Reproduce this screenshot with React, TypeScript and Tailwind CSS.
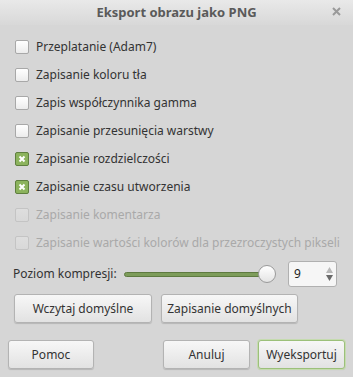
import React from "react";

const options = [
  { label: "Przeplatanie (Adam7)", checked: false, disabled: false },
  { label: "Zapisanie koloru tła", checked: false, disabled: false },
  { label: "Zapis współczynnika gamma", checked: false, disabled: false },
  { label: "Zapisanie przesunięcia warstwy", checked: false, disabled: false },
  { label: "Zapisanie rozdzielczości", checked: true, disabled: false },
  { label: "Zapisanie czasu utworzenia", checked: true, disabled: false },
  { label: "Zapisanie komentarza", checked: false, disabled: true },
  { label: "Zapisanie wartości kolorów dla przezroczystych pikseli", checked: false, disabled: true },
];

function Check({ checked, disabled }: { checked: boolean; disabled: boolean }) {
  if (checked) {
    return (
      <div className="w-[14px] h-[14px] shrink-0 rounded-[2px] border border-[#5f7f3f] bg-[#8cb35d] flex items-center justify-center">
        <svg width="8" height="8" viewBox="0 0 8 8">
          <path d="M1.5 1.5 L6.5 6.5 M6.5 1.5 L1.5 6.5" stroke="#fff" strokeWidth="2" />
        </svg>
      </div>
    );
  }
  return (
    <div
      className={
        "w-[14px] h-[14px] shrink-0 rounded-[2px] border bg-gradient-to-b " +
        (disabled
          ? "border-[#c4c4c4] from-[#dedede] to-[#d8d8d8]"
          : "border-[#a8a8a8] from-[#ffffff] to-[#ececec]")
      }
    />
  );
}

function Btn({ children, className = "" }: { children: React.ReactNode; className?: string }) {
  return (
    <div
      className={
        "h-[29px] shrink-0 rounded-[3px] border bg-gradient-to-b from-[#f7f7f7] to-[#e2e2e2] flex items-center justify-center text-[12px] whitespace-nowrap text-[#333] shadow-[0_1px_1px_rgba(0,0,0,0.15)] " +
        className
      }
    >
      {children}
    </div>
  );
}

export default function App() {
  return (
    <div
      className="w-[353px] h-[377px] bg-[#d6d6d6] flex flex-col overflow-hidden"
      style={{ fontFamily: '"Noto Sans", sans-serif' }}
    >
      <div className="h-[25px] relative flex items-center justify-center bg-gradient-to-b from-[#e9e9e9] to-[#d8d8d8]">
        <span className="text-[13px] font-bold text-[#5a5a5a]">Eksport obrazu jako PNG</span>
        <svg className="absolute right-[12px] top-[7px]" width="9" height="9" viewBox="0 0 9 9">
          <path d="M1 1 L8 8 M8 1 L1 8" stroke="#9a9a9a" strokeWidth="2" />
        </svg>
      </div>

      <div className="flex flex-col pl-[15px] pt-[8px]">
        {options.map((o) => (
          <div key={o.label} className="h-[28px] flex items-center gap-[7px]">
            <Check checked={o.checked} disabled={o.disabled} />
            <span
              className={
                "text-[12px] whitespace-nowrap " +
                (o.disabled ? "text-[#a9a9a9]" : "text-[#333]")
              }
            >
              {o.label}
            </span>
          </div>
        ))}
      </div>

      <div className="flex items-center pl-[13px] pr-[16px] mt-[4px] h-[26px]">
        <span className="text-[12px] text-[#333] w-[111px] shrink-0 whitespace-nowrap">Poziom kompresji:</span>
        <div className="relative flex-1 flex items-center h-[20px] mr-[10px]">
          <div className="w-full h-[5px] rounded-full bg-[#7d9c5a] border border-[#5e7a40]" />
          <div className="absolute right-[-6px] w-[18px] h-[18px] rounded-full border border-[#9a9a9a] bg-gradient-to-b from-[#ffffff] to-[#e4e4e4]" />
        </div>
        <div className="ml-[8px] w-[49px] h-[26px] rounded-[3px] border border-[#b0b0b0] bg-[#f6f6f6] flex items-stretch">
          <span className="flex-1 text-[12px] text-[#222] pl-[5px] flex items-center">9</span>
          <div className="w-[14px] flex flex-col items-center justify-center gap-[2px]">
            <svg width="7" height="6" viewBox="0 0 7 6"><path d="M3.5 0 L7 6 L0 6 Z" fill="#b8b8b8" /></svg>
            <svg width="7" height="6" viewBox="0 0 7 6"><path d="M0 0 L7 0 L3.5 6 Z" fill="#6a6a6a" /></svg>
          </div>
        </div>
      </div>

      <div className="flex gap-[9px] pl-[14px] mt-[7px]">
        <Btn className="w-[138px] border-[#b3b3b3]">Wczytaj domyślne</Btn>
        <Btn className="w-[137px] border-[#b3b3b3]">Zapisanie domyślnych</Btn>
      </div>

      <div className="flex items-center px-[8px] mt-[17px]">
        <Btn className="w-[86px] border-[#b3b3b3]">Pomoc</Btn>
        <div className="flex-1" />
        <Btn className="w-[87px] border-[#b3b3b3]">Anuluj</Btn>
        <Btn className="w-[87px] ml-[8px] border-[#9cc07a] ring-1 ring-[#c5dbaf]">Wyeksportuj</Btn>
      </div>
    </div>
  );
}
